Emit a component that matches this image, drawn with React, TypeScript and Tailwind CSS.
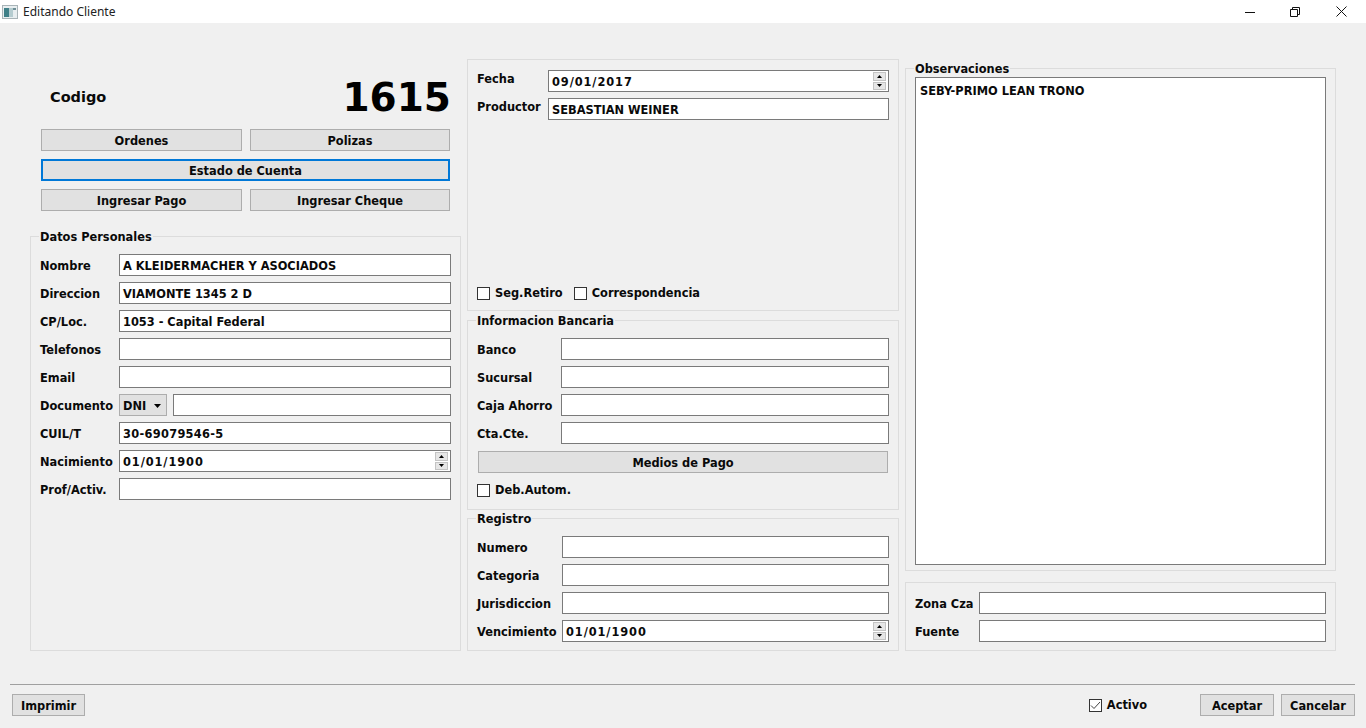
import type { ReactNode } from 'react';

const labelFont = "font-['DejaVu_Sans'] font-bold text-[11.4px] leading-[14px] text-[#0a0a0a]";

const Btn = ({ children, focused, className = '' }: { children: ReactNode; focused?: boolean; className?: string }) => (
  <button
    className={`h-[22px] pt-px flex items-center justify-center bg-[#e1e1e1] ${
      focused ? 'border-2 border-[#0078d7]' : 'border border-[#adadad]'
    } ${labelFont} ${className}`}
  >
    {children}
  </button>
);

const Spinner = () => (
  <div className="ml-auto mr-[2px] w-[13px] h-[18px] flex flex-col gap-px">
    <div className="flex-1 bg-[#e6e6e6] border border-[#c4c4c4] flex items-center justify-center">
      <svg width="5" height="3" viewBox="0 0 5 3"><path d="M2.5 0L5 3H0z" fill="#000" /></svg>
    </div>
    <div className="flex-1 bg-[#e6e6e6] border border-[#c4c4c4] flex items-center justify-center">
      <svg width="5" height="3" viewBox="0 0 5 3"><path d="M0 0h5L2.5 3z" fill="#000" /></svg>
    </div>
  </div>
);

// numeric values run wider than the labels in the original font
const Field = ({ value, spin, valueClass = '', className = '' }: { value?: string; spin?: boolean; valueClass?: string; className?: string }) => (
  <div className={`h-[22px] flex items-center bg-white border border-[#7a7a7a] pl-[3px] ${labelFont} ${className}`}>
    <span className={`whitespace-nowrap pt-px ${valueClass}`}>{value}</span>
    {spin && <Spinner />}
  </div>
);

// label + input row, labelW fixes where the input starts
const Row = ({ label, value, spin, labelW, valueClass }: { label: string; value?: string; spin?: boolean; labelW: string; valueClass?: string }) => (
  <div className="flex items-center">
    <span className={`${labelFont} ${labelW} shrink-0 whitespace-nowrap mt-[2px]`}>{label}</span>
    <Field value={value} spin={spin} valueClass={valueClass} className="flex-1" />
  </div>
);

const Check = ({ label, checked, className = '' }: { label: string; checked?: boolean; className?: string }) => (
  <div className={`flex items-center gap-[5px] ${className}`}>
    <span className="w-[13px] h-[13px] bg-white border border-[#333] flex items-center justify-center">
      {checked && (
        <svg width="11" height="9" viewBox="0 0 11 9" fill="none">
          <path d="M1 4.5L4 7.5L10 1" stroke="#444" strokeWidth="1" />
        </svg>
      )}
    </span>
    <span className={labelFont}>{label}</span>
  </div>
);

const Group = ({ title, className = '', children }: { title?: string; className?: string; children: ReactNode }) => (
  <fieldset className={`border border-[#dcdcdc] min-w-0 ${className}`}>
    {title && <legend className={`ml-[8px] px-px relative top-px ${labelFont}`}>{title}</legend>}
    {children}
  </fieldset>
);

export default function App() {
  return (
    <div className="w-[1366px] h-[728px] bg-[#f0f0f0] flex flex-col overflow-hidden">
      {/* title bar */}
      <div className="h-[23px] bg-white flex items-center shrink-0">
        <svg width="16" height="14" viewBox="0 0 16 14" className="ml-[2px]">
          <rect x="0.5" y="0.5" width="15" height="13" fill="#e8eef0" stroke="#a9b4b8" />
          <rect x="2" y="3" width="5" height="9" fill="#3f8088" />
          <rect x="7" y="3" width="4" height="9" fill="#b5ccd0" />
          <rect x="11" y="3" width="3" height="2" fill="#6f8f96" />
        </svg>
        <span className="ml-[5px] font-['Noto_Sans'] text-[12px] leading-[16px] text-[#222]">Editando Cliente</span>
        <div className="ml-auto flex items-center">
          <svg width="10" height="10" viewBox="0 0 10 10" className="mr-[35px]"><path d="M0 5.5h10" stroke="#111" /></svg>
          <svg width="10" height="10" viewBox="0 0 10 10" fill="none" className="mr-[36px]">
            <path d="M.5 2.5h7v7h-7zM2.5 2.5v-2h7v7h-2" stroke="#111" />
          </svg>
          <svg width="11" height="11" viewBox="0 0 11 11" className="mr-[19px]"><path d="M.5.5l10 10M10.5.5l-10 10" stroke="#111" /></svg>
        </div>
      </div>

      {/* main columns */}
      <div className="flex gap-[6px] ml-[30px] h-[592px] mt-[36px] shrink-0 items-start">
        {/* left */}
        <div className="w-[431px] h-full flex flex-col relative">
          <div className="h-[70px] -mt-[36px] pt-[36px] box-content flex items-center justify-between pl-[20px] pr-[10px]">
            <span className="font-['DejaVu_Sans'] font-bold text-[14.5px] leading-[20px] text-[#0a0a0a] mt-[6px]">Codigo</span>
            <span className="font-['DejaVu_Sans'] font-bold text-[39px] leading-[46px] text-black mt-[8px]">1615</span>
          </div>
          <div className="ml-[11px] w-[409px] grid grid-cols-[201px_200px] gap-x-[8px] gap-y-[8px]">
            <Btn>Ordenes</Btn>
            <Btn>Polizas</Btn>
            <Btn focused className="col-span-2">Estado de Cuenta</Btn>
            <Btn>Ingresar Pago</Btn>
            <Btn>Ingresar Cheque</Btn>
          </div>
          <Group title="Datos Personales" className="mt-[18px] flex-1">
            <div className="flex flex-col gap-[6px] pt-[11px] pl-[9px] pr-[9px]">
              <Row labelW="w-[79px]" label="Nombre" value="A KLEIDERMACHER Y ASOCIADOS" />
              <Row labelW="w-[79px]" label="Direccion" value="VIAMONTE 1345 2 D" />
              <Row labelW="w-[79px]" label="CP/Loc." value="1053 - Capital Federal" />
              <Row labelW="w-[79px]" label="Telefonos" />
              <Row labelW="w-[79px]" label="Email" />
              <div className="flex items-center">
                <span className={`${labelFont} w-[79px] shrink-0 mt-[2px]`}>Documento</span>
                <div className={`w-[48px] h-[22px] pt-px bg-[#e1e1e1] border border-[#adadad] flex items-center pl-[3px] ${labelFont}`}>
                  DNI
                  <svg width="7" height="4" viewBox="0 0 7 4" className="ml-[8px]"><path d="M0 0h7L3.5 4z" fill="#000" /></svg>
                </div>
                <Field className="ml-[6px] flex-1" />
              </div>
              <Row labelW="w-[79px]" label="CUIL/T" value="30-69079546-5" valueClass="tracking-[0.3px]" />
              <Row labelW="w-[79px]" label="Nacimiento" value="01/01/1900" spin valueClass="tracking-[0.9px]" />
              <Row labelW="w-[79px]" label="Prof/Activ." />
            </div>
          </Group>
        </div>

        {/* middle */}
        <div className="w-[432px] h-full flex flex-col">
          <Group className="h-[252px] flex flex-col pl-[9px] pr-[9px]">
            <div className="pt-[10px] flex flex-col gap-[6px]">
              <div className="flex">
                <span className={`${labelFont} w-[71px] shrink-0 pt-[2px]`}>Fecha</span>
                <Field value="09/01/2017" spin valueClass="tracking-[0.9px]" className="flex-1" />
              </div>
              <div className="flex">
                <span className={`${labelFont} w-[71px] shrink-0 pt-[2px]`}>Productor</span>
                <Field value="SEBASTIAN WEINER" className="flex-1" />
              </div>
            </div>
            <div className="flex items-center gap-[11px] mt-[166px]">
              <Check label="Seg.Retiro" />
              <Check label="Correspondencia" />
            </div>
          </Group>
          <Group title="Informacion Bancaria" className="mt-[2px] h-[197px]">
            <div className="flex flex-col gap-[6px] pt-[11px] px-[9px]">
              <Row labelW="w-[84px]" label="Banco" />
              <Row labelW="w-[84px]" label="Sucursal" />
              <Row labelW="w-[84px]" label="Caja Ahorro" />
              <Row labelW="w-[84px]" label="Cta.Cte." />
              <Btn className="ml-px mr-px mt-px">Medios de Pago</Btn>
              <Check label="Deb.Autom." className="mt-[4px]" />
            </div>
          </Group>
          <Group title="Registro" className="mt-[1px] flex-1">
            <div className="flex flex-col gap-[6px] pt-[11px] px-[9px]">
              <Row labelW="w-[85px]" label="Numero" />
              <Row labelW="w-[85px]" label="Categoria" />
              <Row labelW="w-[85px]" label="Jurisdiccion" />
              <Row labelW="w-[85px]" label="Vencimiento" value="01/01/1900" spin valueClass="tracking-[0.9px]" />
            </div>
          </Group>
        </div>

        {/* right */}
        <div className="w-[431px] h-full flex flex-col">
          <Group title="Observaciones" className="mt-[2px] h-[510px]">
            <div className={`mx-[9px] mt-[2px] h-[488px] bg-white border border-[#7a7a7a] pl-[4px] pt-[6px] ${labelFont}`}>
              SEBY-PRIMO LEAN TRONO
            </div>
          </Group>
          <Group className="mt-[11px] flex-1">
            <div className="flex flex-col gap-[6px] pt-[9px] px-[9px]">
              <Row labelW="w-[64px]" label="Zona Cza" />
              <Row labelW="w-[64px]" label="Fuente" />
            </div>
          </Group>
        </div>
      </div>

      {/* bottom bar */}
      <div className="mt-[33px] mx-[10px] w-[1345px] border-t border-[#a0a0a0] shrink-0" />
      <div className="mt-[9px] pl-[12px] pr-[11px] flex items-center">
        <Btn className="w-[73px]">Imprimir</Btn>
        <Check label="Activo" checked className="ml-auto mr-[53px]" />
        <Btn className="w-[74px]">Aceptar</Btn>
        <Btn className="w-[74px] ml-[7px]">Cancelar</Btn>
      </div>
    </div>
  );
}
